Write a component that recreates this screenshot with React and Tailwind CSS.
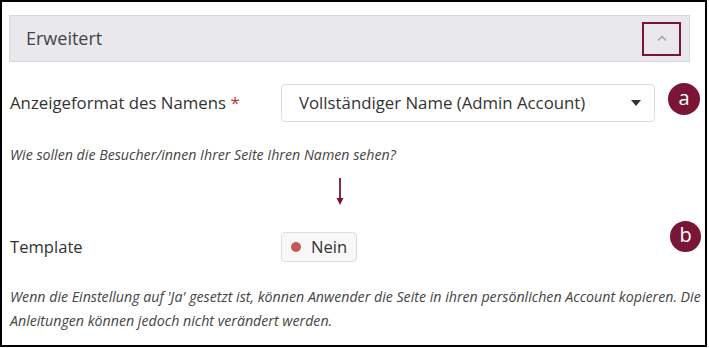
import React from "react";

export default function App() {
  return (
    <div className="w-[709px] h-[348px] bg-white" style={{ fontFamily: '"Open Sans", "Liberation Sans", sans-serif' }}>
      <div className="w-[707px] h-[347px] border-2 border-black bg-white pt-[13px] pl-[7px] pr-[3px]">
        {/* Header */}
        <div className="h-[47px] mr-[12px] bg-[#e9e8ed] border border-[#d8d7dc] flex items-center justify-between pl-[16px] pr-[8px]">
          <span className="text-[18px] text-[#444]">Erweitert</span>
          <div className="w-[39px] h-[34px] border-2 border-[#7b1535] flex items-center justify-center">
            <svg width="10" height="7" viewBox="0 0 10 7" fill="none">
              <path d="M1 5.5 L5 1.5 L9 5.5" stroke="#a5a5a5" strokeWidth="1.6" />
            </svg>
          </div>
        </div>

        {/* Row a */}
        <div className="flex items-center mt-[22px] h-[38px] pl-[1px]">
          <div className="w-[271px] text-[16.8px] text-[#333] whitespace-nowrap">
            Anzeigeformat des Namens <span className="text-[#c0392b]">*</span>
          </div>
          <div className="w-[374px] h-[38px] border border-[#dcdcdc] rounded-[4px] flex items-center justify-between pl-[17px] pr-[13px]">
            <span className="text-[16.8px] text-[#333] whitespace-nowrap">Vollständiger Name (Admin Account)</span>
            <svg width="10" height="6" viewBox="0 0 10 6"><path d="M0 0 H10 L5 6 Z" fill="#333" /></svg>
          </div>
          <div className="ml-[13px] -mt-[8px] w-[32px] h-[32px] rounded-full bg-[#7b1535] text-white flex items-center justify-center text-[20px] leading-none pb-[3px]">
            a
          </div>
        </div>

        <div className="mt-[23px] h-[20px] leading-[20px] pl-[1px] text-[14.2px] italic text-[#444] whitespace-nowrap">
          Wie sollen die Besucher/innen Ihrer Seite Ihren Namen sehen?
        </div>

        <div className="pl-[326px] mt-[13px] h-[28px]">
          <svg width="10" height="28" viewBox="0 0 10 28">
            <line x1="5" y1="0" x2="5" y2="22" stroke="#7b1535" strokeWidth="1.8" />
            <path d="M1.5 20 H8.5 L5 27 Z" fill="#7b1535" />
          </svg>
        </div>

        {/* Row b */}
        <div className="flex items-center mt-[26px] pl-[1px] h-[30px]">
          <div className="w-[271px] text-[16.6px] text-[#333]">Template</div>
          <div className="w-[76px] h-[30px] border border-[#dcdcdc] rounded-[4px] bg-[#f8f8f8] flex items-center pl-[9px] gap-[10px]">
            <span className="w-[10px] h-[10px] rounded-full bg-[#c0585d]" />
            <span className="text-[16.6px] text-[#333]">Nein</span>
          </div>
          <div className="ml-auto mr-[1px] -mt-[22px] w-[31px] h-[31px] rounded-full bg-[#7b1535] text-white flex items-center justify-center text-[20px] leading-none pb-[3px]">
            b
          </div>
        </div>

        <div className="mt-[23px] pl-[1px] text-[14.2px] italic leading-[24px] text-[#444]">
          Wenn die Einstellung auf 'Ja' gesetzt ist, können Anwender die Seite in ihren persönlichen Account kopieren. Die Anleitungen können jedoch nicht verändert werden.
        </div>
      </div>
    </div>
  );
}
